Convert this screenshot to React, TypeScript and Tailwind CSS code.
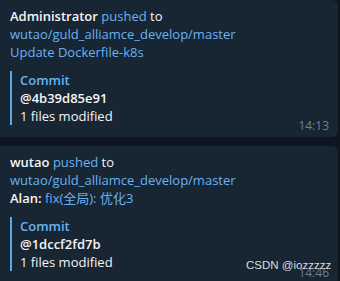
export default function App() {
  return (
    <div className="relative w-[340px] h-[281px] overflow-hidden bg-[#0e1621] font-['Open_Sans',sans-serif] text-[13px] leading-[18px] text-[#f5f5f5]">
      <div className="flex flex-col gap-[9px] pr-[2px]">
        {/* first push */}
        <div className="rounded-r-[6px] bg-[#182533] pl-[10px] pr-[9px] pt-[7px] pb-[4px]">
          <div>
            <span className="font-semibold">Administrator</span>{' '}
            <span className="text-[#6ab2f2]">pushed</span> to
          </div>
          <div className="text-[#6ab2f2]">wutao/guld_alliamce_develop/master</div>
          <div className="text-[#6ab2f2]">Update Dockerfile-k8s</div>
          <div className="mt-[10px] border-l-2 border-[#5aa8ea] pl-[8px]">
            <div className="font-semibold text-[#6ab2f2]">Commit</div>
            <div className="font-semibold">@4b39d85e91</div>
            <div>1 files modified</div>
          </div>
          <div className="-mt-[6px] flex justify-end text-[12px] leading-[14px] text-[#6d7f8f]">14:13</div>
        </div>

        {/* second push */}
        <div className="rounded-r-[6px] bg-[#182533] pl-[10px] pr-[9px] pt-[7px] pb-[4px]">
          <div>
            <span className="font-semibold">wutao</span>{' '}
            <span className="text-[#6ab2f2]">pushed</span> to
          </div>
          <div className="text-[#6ab2f2]">wutao/guld_alliamce_develop/master</div>
          <div>
            <span className="font-semibold">Alan:</span>{' '}
            <span className="text-[#6ab2f2] font-['Open_Sans','Noto_Sans_CJK_SC',sans-serif]">fix(全局): 优化3</span>
          </div>
          <div className="mt-[10px] border-l-2 border-[#5aa8ea] pl-[8px]">
            <div className="font-semibold text-[#6ab2f2]">Commit</div>
            <div className="font-semibold">@1dccf2fd7b</div>
            <div>1 files modified</div>
          </div>
          <div className="-mt-[5px] flex justify-end text-[12px] leading-[14px] text-[#6d7f8f]">14:46</div>
        </div>
      </div>

      {/* watermark */}
      <div className="absolute left-[246px] top-[258px] font-['Liberation_Sans',sans-serif] text-[11.5px] leading-[14px] text-[#d9dcdf]">
        CSDN @iozzzzz
      </div>
    </div>
  );
}
